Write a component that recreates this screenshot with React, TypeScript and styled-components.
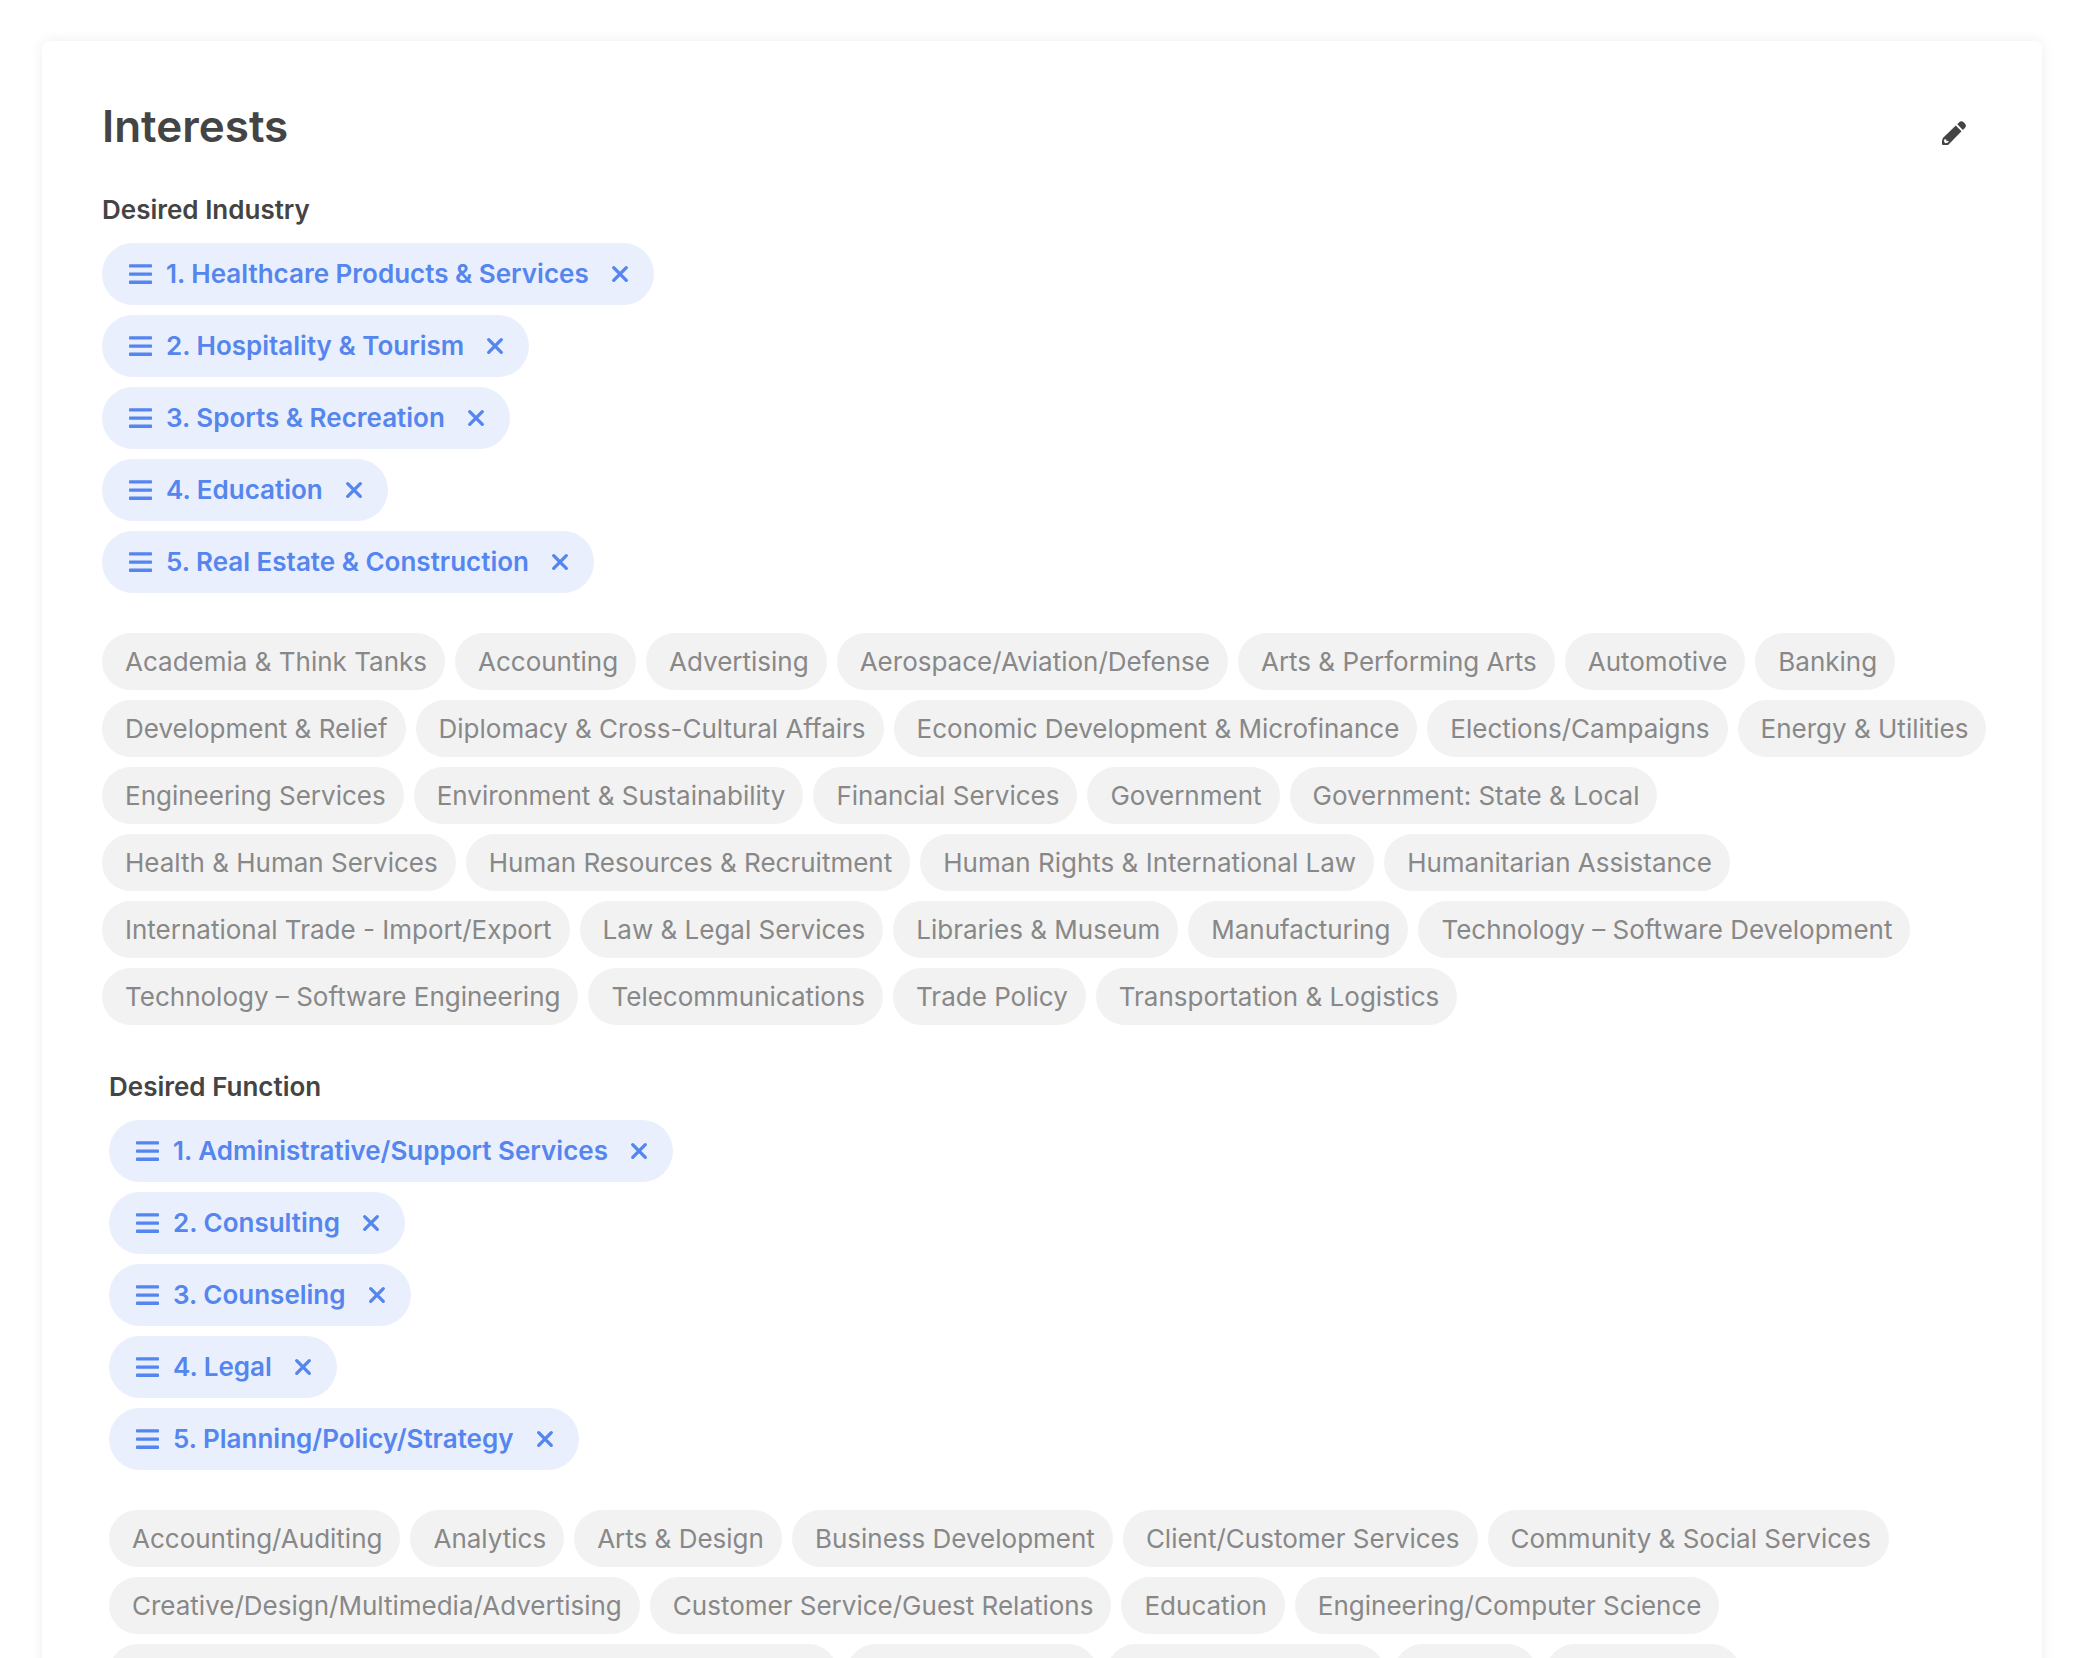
import React, { useState } from "react";
import styled, { createGlobalStyle } from "styled-components";

const colors = {
  page: "#ffffff",
  heading: "#444444",
  accent: "#5585ee",
  accentSoft: "#e9effc",
  muted: "#888888",
  mutedSoft: "#f2f2f2",
};

const GlobalStyle = createGlobalStyle`
  * { box-sizing: border-box; }
  body {
    margin: 0;
    background: ${colors.page};
    color: ${colors.heading};
    font-family: Inter, "Liberation Sans", sans-serif;
    font-size: 26px;
    line-height: 34px;
  }
  button {
    border: 0;
    padding: 0;
    background: none;
    color: inherit;
    font: inherit;
    cursor: pointer;
  }
  ul, ol { list-style: none; margin: 0; padding: 0; }
`;

const Page = styled.main`
  padding: 41px 44px 41px 42px;
`;

const Card = styled.section`
  padding: 57px 42px 57px 60px;
  border-radius: 8px;
  background: #ffffff;
  box-shadow: 0 0 14px rgba(0, 0, 0, 0.07);
`;

const Header = styled.header`
  display: flex;
  align-items: flex-end;
  justify-content: space-between;
  padding-right: 25px;
  margin-bottom: 39px;
`;

const Title = styled.h1`
  margin: 0;
  font-size: 44px;
  font-weight: 600;
  line-height: 56px;
`;

const EditButton = styled.button`
  display: flex;
  align-items: center;
  justify-content: center;
  width: 42px;
  height: 42px;
`;

const Group = styled.section<{ $indent?: boolean }>`
  margin-left: ${(p) => (p.$indent ? 7 : 0)}px;

  & + & {
    margin-top: 45px;
  }
`;

const GroupTitle = styled.h2`
  margin: 0 0 16px;
  font-size: 26px;
  font-weight: 600;
  line-height: 34px;
`;

const RankedList = styled.ol`
  display: flex;
  flex-direction: column;
  align-items: flex-start;
  gap: 10px;
  margin-bottom: 40px;
`;

const RankedChip = styled.li`
  display: flex;
  align-items: center;
  height: 62px;
  padding: 0 25px 0 27px;
  border-radius: 31px;
  background: ${colors.accentSoft};
  color: ${colors.accent};
  font-weight: 600;
`;

const ChipLabel = styled.span`
  margin: 0 22px 0 14px;
  white-space: nowrap;
`;

const IconButton = styled.button`
  display: flex;
`;

const OptionList = styled.ul`
  display: flex;
  flex-wrap: wrap;
  gap: 10px;
`;

const OptionChip = styled.button`
  display: block;
  height: 57px;
  padding: 0 18px 0 23px;
  border-radius: 29px;
  background: ${colors.mutedSoft};
  color: ${colors.muted};
  white-space: nowrap;
`;

const PencilIcon = () => (
  <svg width="24" height="24" viewBox="0 0 24 24" fill="currentColor" aria-hidden="true">
    <path d="M15.3 3.3 17.2 1.3Q19.5-.9 21.9 1.5L22.8 2.4Q25.1 4.8 22.9 7L20.9 8.9Z" />
    <path
      fillRule="evenodd"
      d="M13.8 4.6 19.5 10.3 7.6 22.4 6 24H1Q0 24 0 23V20L.9 16.9ZM2.6 18 1.9 20.6 3.4 22.2 6 21.5 6.8 20.3 5.9 19.7 4.5 20.2 4.3 18.4Z"
    />
  </svg>
);

const HandleIcon = () => (
  <svg width="23" height="22" viewBox="0 0 23 22" fill="currentColor" aria-hidden="true">
    <rect y="1.2" width="23" height="3.4" rx=".8" />
    <rect y="9.4" width="23" height="3.4" rx=".8" />
    <rect y="17.6" width="23" height="3.4" rx=".8" />
  </svg>
);

const CrossIcon = () => (
  <svg
    width="18"
    height="18"
    viewBox="0 0 18 18"
    fill="none"
    stroke="currentColor"
    strokeWidth="3.3"
    strokeLinecap="round"
    aria-hidden="true"
  >
    <path d="M2.7 2.7 15.3 15.3M15.3 2.7 2.7 15.3" />
  </svg>
);

interface InterestGroupProps {
  id: string;
  title: string;
  initial: string[];
  options: string[];
  indent?: boolean;
}

function InterestGroup({ id, title, initial, options, indent }: InterestGroupProps) {
  const [selected, setSelected] = useState(initial);
  const [available, setAvailable] = useState(options);

  const remove = (name: string) => {
    setSelected(selected.filter((item) => item !== name));
    setAvailable([...available, name].sort());
  };

  const add = (name: string) => {
    setSelected([...selected, name]);
    setAvailable(available.filter((item) => item !== name));
  };

  return (
    <Group $indent={indent} aria-labelledby={id}>
      <GroupTitle id={id}>{title}</GroupTitle>
      <RankedList>
        {selected.map((name, index) => (
          <RankedChip key={name}>
            <IconButton type="button" aria-label={`Reorder ${name}`}>
              <HandleIcon />
            </IconButton>
            <ChipLabel>{`${index + 1}. ${name}`}</ChipLabel>
            <IconButton type="button" aria-label={`Remove ${name}`} onClick={() => remove(name)}>
              <CrossIcon />
            </IconButton>
          </RankedChip>
        ))}
      </RankedList>
      <OptionList>
        {available.map((name) => (
          <li key={name}>
            <OptionChip type="button" onClick={() => add(name)}>
              {name}
            </OptionChip>
          </li>
        ))}
      </OptionList>
    </Group>
  );
}

const selectedIndustries = [
  "Healthcare Products & Services",
  "Hospitality & Tourism",
  "Sports & Recreation",
  "Education",
  "Real Estate & Construction",
];

const industries = [
  "Academia & Think Tanks",
  "Accounting",
  "Advertising",
  "Aerospace/Aviation/Defense",
  "Arts & Performing Arts",
  "Automotive",
  "Banking",
  "Development & Relief",
  "Diplomacy & Cross-Cultural Affairs",
  "Economic Development & Microfinance",
  "Elections/Campaigns",
  "Energy & Utilities",
  "Engineering Services",
  "Environment & Sustainability",
  "Financial Services",
  "Government",
  "Government: State & Local",
  "Health & Human Services",
  "Human Resources & Recruitment",
  "Human Rights & International Law",
  "Humanitarian Assistance",
  "International Trade - Import/Export",
  "Law & Legal Services",
  "Libraries & Museum",
  "Manufacturing",
  "Technology – Software Development",
  "Technology – Software Engineering",
  "Telecommunications",
  "Trade Policy",
  "Transportation & Logistics",
];

const selectedFunctions = [
  "Administrative/Support Services",
  "Consulting",
  "Counseling",
  "Legal",
  "Planning/Policy/Strategy",
];

const functions = [
  "Accounting/Auditing",
  "Analytics",
  "Arts & Design",
  "Business Development",
  "Client/Customer Services",
  "Community & Social Services",
  "Creative/Design/Multimedia/Advertising",
  "Customer Service/Guest Relations",
  "Education",
  "Engineering/Computer Science",
  "Environmental Science/Sustainability/Natural Resources",
  "Event Production",
  "Financial Reporting",
  "Housing",
  "International",
];

export default function App() {
  return (
    <>
      <GlobalStyle />
      <Page>
        <Card aria-labelledby="interests">
          <Header>
            <Title id="interests">Interests</Title>
            <EditButton type="button" aria-label="Edit interests">
              <PencilIcon />
            </EditButton>
          </Header>
          <InterestGroup
            id="desired-industry"
            title="Desired Industry"
            initial={selectedIndustries}
            options={industries}
          />
          <InterestGroup
            id="desired-function"
            title="Desired Function"
            initial={selectedFunctions}
            options={functions}
            indent
          />
        </Card>
      </Page>
    </>
  );
}
